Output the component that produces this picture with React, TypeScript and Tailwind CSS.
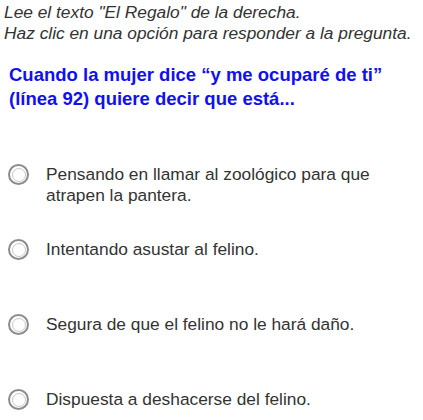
const options = [
  "Pensando en llamar al zoológico para que atrapen la pantera.",
  "Intentando asustar al felino.",
  "Segura de que el felino no le hará daño.",
  "Dispuesta a deshacerse del felino.",
];

function Radio() {
  return (
    <span className="flex h-[21px] w-[21px] shrink-0 items-center justify-center rounded-full border-2 border-[#8c8c8c] bg-white">
      <span className="h-[14px] w-[14px] rounded-full border border-[#c8c8c8]" />
    </span>
  );
}

export default function App() {
  return (
    <div className="min-h-screen bg-white font-['Liberation_Sans',Arial,sans-serif] text-[#333]">
      <div className="px-[4px] pt-[2px] text-[17.33px] italic leading-[21px] text-[#333]">
        <p>Lee el texto "El Regalo" de la derecha.</p>
        <p>Haz clic en una opción para responder a la pregunta.</p>
      </div>
      <h2 className="mt-[19px] px-[9px] text-[18.5px] font-bold leading-[24px] text-[#1010f0]">
        Cuando la mujer dice “y me ocuparé de ti” (línea 92) quiere decir que está...
      </h2>
      <div className="mt-[53px] flex flex-col gap-[33px] pl-[8px] pr-[40px]">
        {options.map((o) => (
          <label key={o} className="flex min-h-[42px] cursor-pointer items-start gap-[17px]">
            <Radio />
            <span className="text-[17.33px] leading-[21px] text-[#333]">{o}</span>
          </label>
        ))}
      </div>
    </div>
  );
}
